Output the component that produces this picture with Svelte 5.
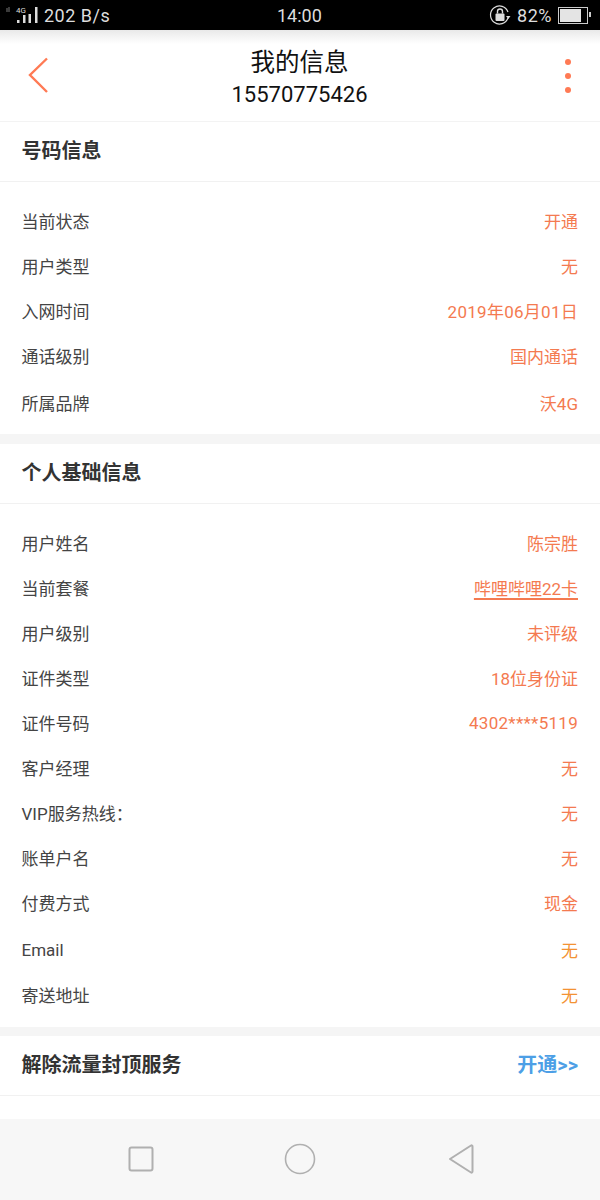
<script>
    const numberRows = [
        { label: "当前状态", value: "开通" },
        { label: "用户类型", value: "无" },
        { label: "入网时间", value: "2019年06月01日", spaced: true },
        { label: "通话级别", value: "国内通话" },
        { label: "所属品牌", value: "沃4G", gap: true }
    ];

    const baseRows = [
        { label: "用户姓名", value: "陈宗胜" },
        { label: "当前套餐", value: "哔哩哔哩22卡", link: true },
        { label: "用户级别", value: "未评级" },
        { label: "证件类型", value: "18位身份证" },
        { label: "证件号码", value: "4302****5119", spaced: true },
        { label: "客户经理", value: "无" },
        { label: "VIP服务热线：", value: "无" },
        { label: "账单户名", value: "无" },
        { label: "付费方式", value: "现金" },
        { label: "Email", value: "无", gap: true, amber: true },
        { label: "寄送地址", value: "无", amber: true }
    ];
</script>

<div class="screen">
    <div class="status">
        <div class="status-left">
            <svg class="signal" width="38" height="20" viewBox="0 0 38 20">
                <path d="M7 7V3M9 7V2" stroke="#777" stroke-width="1" fill="none" />
                <text x="16" y="8" class="net">4G</text>
                <rect x="17" y="15" width="2.500" height="3" fill="#ddd" />
                <rect x="23" y="10" width="2.500" height="8" fill="#ddd" />
                <rect x="28.500" y="9" width="2.500" height="9" fill="#ddd" />
                <rect x="35" y="2" width="2.500" height="16" fill="#ddd" />
            </svg>
            <span class="speed">202 B/s</span>
        </div>
        <span class="clock">14:00</span>
        <div class="status-right">
            <svg width="22" height="22" viewBox="0 0 22 22">
                <path d="M19 14A9 9 0 1 1 19 8" stroke="#ddd" stroke-width="1.2" fill="none" />
                <path d="M17 12h4.500l-2.200 3z" fill="#ddd" />
                <rect x="6.500" y="9.500" width="9" height="7.500" rx="1" fill="#ddd" />
                <path d="M8.500 9.500V7.500a2.500 2.500 0 0 1 5 0v2" stroke="#ddd" stroke-width="1.400" fill="none" />
            </svg>
            <span class="pct">82%</span>
            <div class="battery"><div class="charge"></div></div>
        </div>
    </div>

    <header>
        <svg class="back" width="20" height="36" viewBox="0 0 20 36">
            <path d="M19 1.500 2 18l17 17" stroke="#ff7a54" stroke-width="2.400" fill="none" />
        </svg>
        <div class="heading">
            <div class="title">我的信息</div>
            <div class="phone">15570775426</div>
        </div>
        <div class="more"><i></i><i></i><i></i></div>
    </header>

    <section class="first">
        <h2>号码信息</h2>
        <div class="rows">
            {#each numberRows as row}
                <div class="row" class:gap={row.gap}>
                    <span class="label">{row.label}</span>
                    <span class="value" class:spaced={row.spaced}>{row.value}</span>
                </div>
            {/each}
        </div>
    </section>

    <section>
        <h2>个人基础信息</h2>
        <div class="rows">
            {#each baseRows as row}
                <div class="row" class:gap={row.gap}>
                    <span class="label">{row.label}</span>
                    <span class="value" class:link={row.link} class:amber={row.amber} class:spaced={row.spaced}>{row.value}</span>
                </div>
            {/each}
        </div>
    </section>

    <section class="last">
        <h2>
            解除流量封顶服务
            <span class="open">开通&gt;&gt;</span>
        </h2>
    </section>

    <nav>
        <svg width="26" height="26" viewBox="0 0 26 26">
            <rect x="1.500" y="1.500" width="23" height="23" rx="2" stroke="#b0b0b0" stroke-width="2" fill="none" />
        </svg>
        <svg width="32" height="32" viewBox="0 0 32 32">
            <circle cx="16" cy="16" r="14.500" stroke="#b0b0b0" stroke-width="1.600" fill="none" />
        </svg>
        <svg class="tri" width="28" height="32" viewBox="0 0 28 32">
            <path d="M24 2.500 3 16l21 13.500a1 1 0 0 0 1.500-1V3.500a1 1 0 0 0-1.500-1z" stroke="#b0b0b0" stroke-width="2" fill="none" stroke-linejoin="round" />
        </svg>
    </nav>
</div>

<style>
    :global(body) {
        margin: 0;
        background: #fff;
    }

    .screen {
        width: 600px;
        height: 1200px;
        display: flex;
        flex-direction: column;
        overflow: hidden;
        font-family: "Roboto", "Noto Sans CJK SC", sans-serif;
    }

    .status {
        height: 30px;
        flex: none;
        background: #000;
        color: #ddd;
        display: flex;
        align-items: center;
        justify-content: space-between;
        font-size: 18px;
        padding: 0 12px 0 0;
        box-sizing: border-box;
        position: relative;
    }

    .status-left {
        display: flex;
        align-items: center;
        gap: 6px;
    }

    .signal {
        overflow: visible;
    }

    .net {
        font-size: 8px;
        fill: #ddd;
        font-family: "Roboto", sans-serif;
    }

    .speed {
        letter-spacing: 0.5px;
    }

    .clock {
        position: absolute;
        left: 277px;
    }

    .status-right {
        display: flex;
        align-items: center;
        gap: 6px;
    }

    .pct {
        letter-spacing: 0.5px;
    }

    .battery {
        width: 26px;
        height: 13px;
        border: 1px solid #ccc;
        padding: 1px;
        box-sizing: content-box;
        position: relative;
    }

    .battery::after {
        content: "";
        position: absolute;
        right: -4px;
        top: 4px;
        width: 2px;
        height: 5px;
        background: #ccc;
    }

    .charge {
        width: 82%;
        height: 100%;
        background: #e4e4e4;
    }

    header {
        height: 92px;
        flex: none;
        box-sizing: border-box;
        border-bottom: 1px solid #f3f3f3;
        display: grid;
        grid-template-columns: 1fr auto 1fr;
        align-items: center;
        padding: 0 29px 0 28px;
        background: linear-gradient(#e9e9e9, #fff 14px);
    }

    .back {
        margin-top: -1px;
    }

    .heading {
        text-align: center;
        color: #111;
        margin-top: 3px;
    }

    .title {
        font-size: 24.5px;
        line-height: 32px;
    }

    .phone {
        font-size: 22px;
        line-height: 30px;
        padding-top: 1px;
        margin-bottom: -2px;
    }

    .more {
        display: flex;
        flex-direction: column;
        gap: 8px;
        justify-self: end;
    }

    .more i {
        display: block;
        width: 6px;
        height: 6px;
        border-radius: 50%;
        background: #ff7a54;
    }

    section {
        border-top: 10px solid #f5f5f5;
        flex: none;
    }

    section.first {
        border-top: 0;
    }

    section.last {
        border-top-width: 9px;
    }

    h2 {
        margin: 0;
        height: 60px;
        box-sizing: border-box;
        border-bottom: 1px solid #f1f1f1;
        padding: 0 22px 4px 21.5px;
        display: flex;
        align-items: center;
        justify-content: space-between;
        font-size: 20px;
        font-weight: 700;
        color: #333;
    }

    .open {
        color: #4d9fe6;
        font-size: 20px;
    }

    .rows {
        padding: 16px 0 9px;
    }

    section:not(.first) .rows {
        padding-bottom: 10px;
    }

    .row {
        height: 45px;
        padding: 0 22px 0 21.5px;
        display: flex;
        align-items: center;
        justify-content: space-between;
        font-size: 17px;
    }

    .row.gap {
        margin-top: 2px;
    }

    .label {
        color: #444;
    }

    .value {
        color: #f47a50;
    }

    .value.spaced {
        letter-spacing: 0.27px;
    }

    .value.link {
        text-decoration: underline;
        text-decoration-thickness: 2px;
        text-underline-offset: 3px;
    }

    .value.amber {
        color: #f39233;
    }

    nav {
        margin-top: auto;
        height: 81px;
        flex: none;
        background: #f7f7f7;
        display: flex;
        align-items: center;
        padding: 0 0 2px 3px;
        box-sizing: border-box;
        justify-content: center;
        gap: 130px;
    }

    .tri {
        margin-left: 1px;
    }
</style>
